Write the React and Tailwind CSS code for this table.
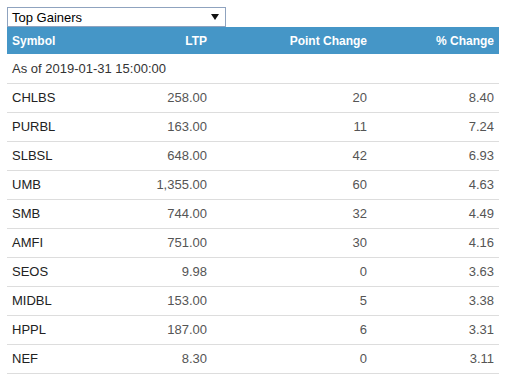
import React from 'react';

const rows = [
    ['CHLBS', '258.00', '20', '8.40'],
    ['PURBL', '163.00', '11', '7.24'],
    ['SLBSL', '648.00', '42', '6.93'],
    ['UMB', '1,355.00', '60', '4.63'],
    ['SMB', '744.00', '32', '4.49'],
    ['AMFI', '751.00', '30', '4.16'],
    ['SEOS', '9.98', '0', '3.63'],
    ['MIDBL', '153.00', '5', '3.38'],
    ['HPPL', '187.00', '6', '3.31'],
    ['NEF', '8.30', '0', '3.11'],
];

const cols = 'grid grid-cols-[95px_100px_160px_127px]';

export default function App() {
    return (
        <div className="w-[508px] h-[376px] bg-white pt-[7px] pl-[7px] text-[13px] font-['Liberation_Sans',Arial,sans-serif]">
            {/* dropdown */}
            <div className="w-[219px] h-[20px] border border-[#8fa3bf] bg-white flex items-center justify-between pl-[4px] pr-[6px] text-black leading-none">
                <span>Top Gainers</span>
                <svg width="8" height="6" viewBox="0 0 8 6"><path d="M0 0h8L4 6z" fill="#111" /></svg>
            </div>

            <div className="w-[492px]">
                <div className={`${cols} h-[27px] items-center bg-[#4596c7] text-white text-[12px] font-bold px-[5px]`}>
                    <div>Symbol</div>
                    <div className="text-right">LTP</div>
                    <div className="text-right">Point Change</div>
                    <div className="text-right">% Change</div>
                </div>
                <div className="h-[29px] flex items-center px-[5px] text-[#333]">
                    As of 2019-01-31 15:00:00
                </div>
                {rows.map(([sym, ltp, pt, pct]) => (
                    <div key={sym} className={`${cols} h-[29px] items-center border-t border-[#dddddd] px-[5px] text-[#555]`}>
                        <div className="text-[#222]">{sym}</div>
                        <div className="text-right">{ltp}</div>
                        <div className="text-right">{pt}</div>
                        <div className="text-right">{pct}</div>
                    </div>
                ))}
                <div className="border-t border-[#dddddd]" />
            </div>
        </div>
    );
}
